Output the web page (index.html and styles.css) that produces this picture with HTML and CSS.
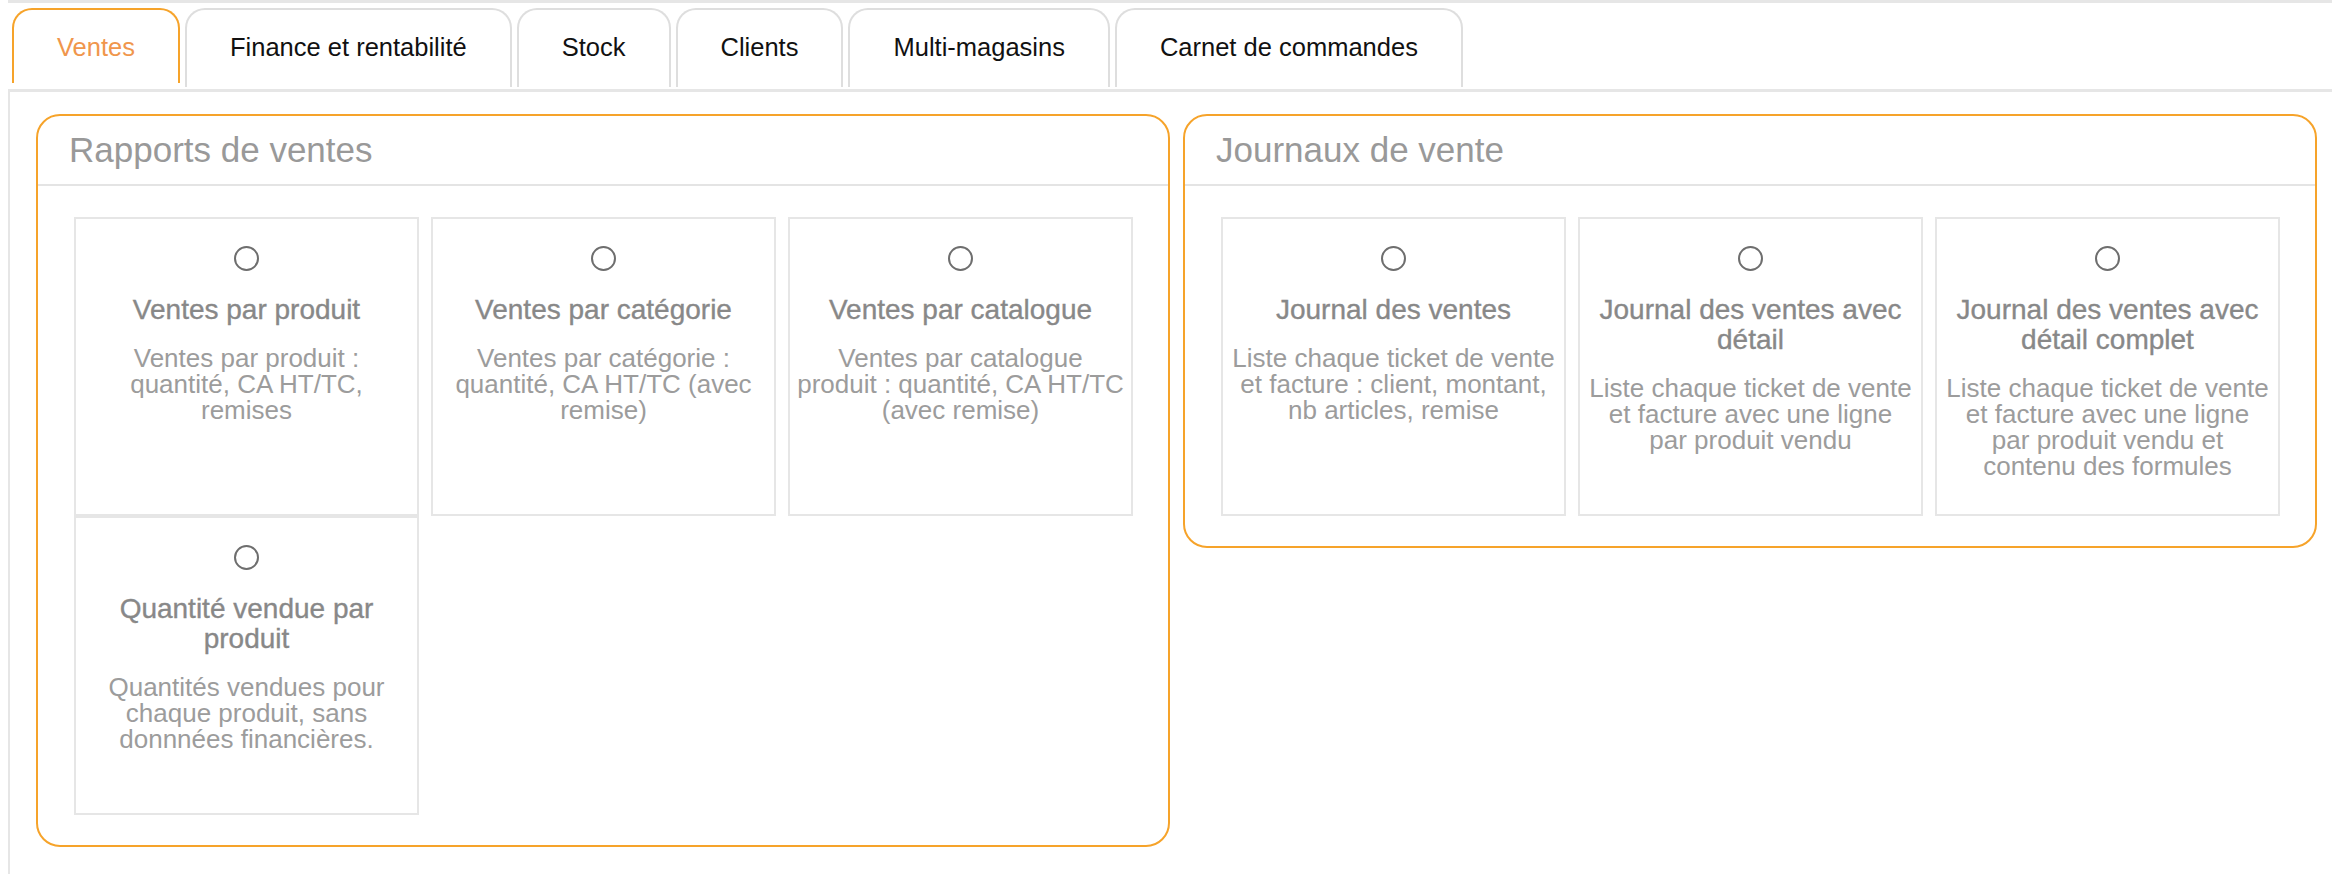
FILE: index.html
```html
<!DOCTYPE html>
<html lang="fr">
<head>
<meta charset="utf-8">
<title>Rapports - Ventes</title>
<link rel="stylesheet" href="styles.css">
</head>
<body>
<div class="topbar"></div>
<nav class="tabs">
  <div class="tab active">Ventes</div>
  <div class="tab">Finance et rentabilité</div>
  <div class="tab">Stock</div>
  <div class="tab">Clients</div>
  <div class="tab">Multi-magasins</div>
  <div class="tab">Carnet de commandes</div>
</nav>
<main class="panel">
  <section class="card">
    <header class="card-head">Rapports de ventes</header>
    <div class="card-body">
      <label class="item">
        <span class="radio"></span>
        <span class="item-title">Ventes par produit</span>
        <span class="item-desc">Ventes par produit :<br>quantité, CA HT/TC,<br>remises</span>
      </label>
      <label class="item">
        <span class="radio"></span>
        <span class="item-title">Ventes par catégorie</span>
        <span class="item-desc">Ventes par catégorie :<br>quantité, CA HT/TC (avec<br>remise)</span>
      </label>
      <label class="item">
        <span class="radio"></span>
        <span class="item-title">Ventes par catalogue</span>
        <span class="item-desc">Ventes par catalogue<br>produit : quantité, CA HT/TC<br>(avec remise)</span>
      </label>
      <label class="item">
        <span class="radio"></span>
        <span class="item-title">Quantité vendue par<br>produit</span>
        <span class="item-desc">Quantités vendues pour<br>chaque produit, sans<br>donnnées financières.</span>
      </label>
    </div>
  </section>
  <section class="card">
    <header class="card-head">Journaux de vente</header>
    <div class="card-body">
      <label class="item">
        <span class="radio"></span>
        <span class="item-title">Journal des ventes</span>
        <span class="item-desc">Liste chaque ticket de vente<br>et facture : client, montant,<br>nb articles, remise</span>
      </label>
      <label class="item">
        <span class="radio"></span>
        <span class="item-title">Journal des ventes avec<br>détail</span>
        <span class="item-desc">Liste chaque ticket de vente<br>et facture avec une ligne<br>par produit vendu</span>
      </label>
      <label class="item">
        <span class="radio"></span>
        <span class="item-title">Journal des ventes avec<br>détail complet</span>
        <span class="item-desc">Liste chaque ticket de vente<br>et facture avec une ligne<br>par produit vendu et<br>contenu des formules</span>
      </label>
    </div>
  </section>
</main>
</body>
</html>
```

FILE: styles.css
```css
* {
  box-sizing: border-box;
}

html, body {
  margin: 0;
  padding: 0;
  background: #ffffff;
}

body {
  font-family: "Liberation Sans", Arial, Helvetica, sans-serif;
  width: 2332px;
  height: 874px;
  overflow: hidden;
}

.topbar {
  height: 3px;
  margin-left: 8px;
  background: #e6e6e6;
}

.tabs {
  display: flex;
  align-items: flex-start;
  gap: 5px;
  padding-left: 12px;
  margin-top: 5px;
  height: 79px;
}

.tab {
  height: 79px;
  padding: 22px 43px 0;
  border: 2px solid #dedede;
  border-bottom: none;
  border-radius: 20px 20px 0 0;
  font-size: 25.5px;
  line-height: 30px;
  color: #111111;
  white-space: nowrap;
}

.tab.active {
  height: 75px;
  border-color: #f6a32a;
  color: #f0964c;
}

.panel {
  margin-top: 2px;
  margin-left: 8px;
  border-top: 3px solid #e6e6e6;
  border-left: 2px solid #e6e6e6;
  padding: 22px 0 0 26px;
  display: flex;
  align-items: flex-start;
  gap: 13px;
  height: 800px;
}

.card {
  width: 1134px;
  flex: none;
  border: 2px solid #f6a32a;
  border-radius: 24px;
}

.card-head {
  height: 70px;
  padding-left: 31px;
  border-bottom: 2px solid #e4e4e4;
  font-size: 35px;
  line-height: 68px;
  color: #999999;
}

.card-body {
  display: flex;
  flex-wrap: wrap;
  column-gap: 12px;
  row-gap: 0;
  padding: 31px 33px 30px 36px;
}

.item {
  width: 345px;
  height: 299px;
  border: 2px solid #e6e6e6;
  padding: 27px 5px 0;
  display: flex;
  flex-direction: column;
  align-items: center;
  text-align: center;
}

.radio {
  width: 25px;
  height: 25px;
  border: 2px solid #6e6e6e;
  border-radius: 50%;
  flex: none;
}

.item-title {
  margin-top: 24px;
  font-size: 28px;
  line-height: 30px;
  color: #888888;
  -webkit-text-stroke: 0.35px #888888;
  white-space: nowrap;
}

.item-desc {
  margin-top: 20px;
  font-size: 26px;
  line-height: 26px;
  color: #9c9c9c;
  white-space: nowrap;
}
```
